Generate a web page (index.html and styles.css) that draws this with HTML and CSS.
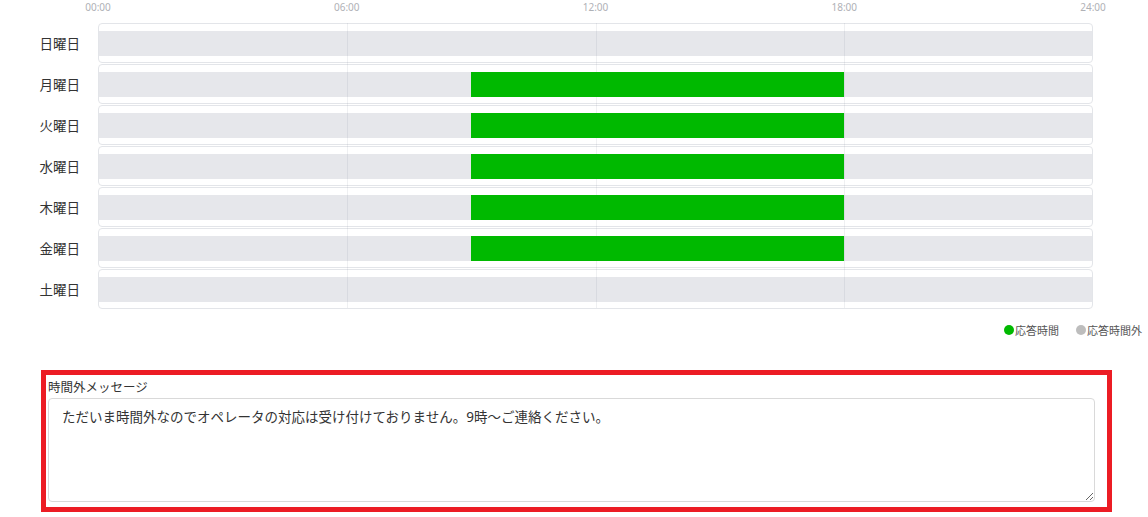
FILE: index.html
```html
<!DOCTYPE html>
<html lang="ja">
<head>
<meta charset="utf-8">
<title>応答時間</title>
<link rel="stylesheet" href="styles.css">
</head>
<body>
<div class="chart">
  <div class="axis">
    <span class="tick" style="left:0%">00:00</span>
    <span class="tick" style="left:25%">06:00</span>
    <span class="tick" style="left:50%">12:00</span>
    <span class="tick" style="left:75%">18:00</span>
    <span class="tick" style="left:100%">24:00</span>
  </div>
  <div class="rows">
    <div class="grid">
      <span class="gline" style="left:25%"></span>
      <span class="gline" style="left:50%"></span>
      <span class="gline" style="left:75%"></span>
    </div>
    <div class="row"><div class="day">日曜日</div><div class="track"><div class="bar"></div></div></div>
    <div class="row"><div class="day">月曜日</div><div class="track"><div class="bar"><span class="on" style="left:37.5%;width:37.5%"></span></div></div></div>
    <div class="row"><div class="day">火曜日</div><div class="track"><div class="bar"><span class="on" style="left:37.5%;width:37.5%"></span></div></div></div>
    <div class="row"><div class="day">水曜日</div><div class="track"><div class="bar"><span class="on" style="left:37.5%;width:37.5%"></span></div></div></div>
    <div class="row"><div class="day">木曜日</div><div class="track"><div class="bar"><span class="on" style="left:37.5%;width:37.5%"></span></div></div></div>
    <div class="row"><div class="day">金曜日</div><div class="track"><div class="bar"><span class="on" style="left:37.5%;width:37.5%"></span></div></div></div>
    <div class="row"><div class="day">土曜日</div><div class="track"><div class="bar"></div></div></div>
  </div>
  <div class="legend">
    <span class="item"><span class="dot dot-on"></span>応答時間</span>
    <span class="item"><span class="dot dot-off"></span>応答時間外</span>
  </div>
</div>
<div class="msgbox">
  <label class="msglabel" for="msg">時間外メッセージ</label>
  <textarea id="msg" class="msgarea">ただいま時間外なのでオペレータの対応は受け付けておりません。9時～ご連絡ください。</textarea>
</div>
</body>
</html>
```

FILE: styles.css
```css
html, body {
  margin: 0;
  padding: 0;
  background: #fff;
}
body {
  font-family: "Noto Sans", "Noto Sans CJK JP", sans-serif;
  color: #333;
  width: 1148px;
  overflow: hidden;
}
.axis {
  position: relative;
  margin-left: 98px;
  width: 995px;
  height: 23px;
}
.tick {
  position: absolute;
  top: 0;
  transform: translateX(-50%);
  font-size: 10px;
  line-height: 14px;
  color: #afb1b6;
  white-space: nowrap;
}
.rows {
  position: relative;
}
.grid {
  position: absolute;
  left: 98px;
  width: 995px;
  top: 0;
  bottom: 1px;
  z-index: 1;
  pointer-events: none;
}
.gline {
  position: absolute;
  top: 0;
  bottom: 0;
  width: 1px;
  background: rgba(110, 120, 140, 0.11);
}
.row {
  display: flex;
  align-items: center;
  margin-bottom: 1px;
}
.day {
  width: 98px;
  box-sizing: border-box;
  padding-right: 18px;
  text-align: right;
  font-family: "Noto Sans CJK JP", sans-serif;
  font-size: 13.5px;
  color: #333;
}
.track {
  width: 995px;
  height: 40px;
  box-sizing: border-box;
  border: 1px solid #e3e5e9;
  border-radius: 4px;
  padding-top: 7px;
}
.bar {
  position: relative;
  height: 25px;
  background: #e6e7eb;
}
.on {
  position: absolute;
  top: 0;
  bottom: 0;
  background: #00b900;
  z-index: 2;
}
.legend {
  display: flex;
  justify-content: flex-end;
  gap: 17px;
  margin-top: 13px;
  padding-right: 6px;
  font-family: "Noto Sans CJK JP", sans-serif;
  font-size: 11px;
  line-height: 16px;
  color: #555;
}
.item {
  display: flex;
  align-items: center;
}
.dot {
  width: 10px;
  height: 10px;
  border-radius: 50%;
  margin-right: 1px;
}
.dot-on { background: #00b900; }
.dot-off { background: #bdbdbd; }
.msgbox {
  margin: 32px 0 0 41px;
  width: 1071px;
  box-sizing: border-box;
  border: 5px solid #ec1c24;
  padding: 0 12px 5px 2px;
}
.msglabel {
  display: block;
  padding-top: 3px;
  margin-bottom: 2px;
  line-height: 18px;
  font-family: "Noto Sans CJK JP", sans-serif;
  font-size: 12.5px;
  color: #333;
}
.msgarea {
  display: block;
  width: 100%;
  height: 104px;
  box-sizing: border-box;
  margin: 0;
  border: 1px solid #d9d9d9;
  border-radius: 4px;
  padding: 8px 13px;
  font-family: "Noto Sans", "Noto Sans CJK JP", sans-serif;
  font-size: 13.5px;
  line-height: 20px;
  color: #333;
  background: #fff;
}
```
